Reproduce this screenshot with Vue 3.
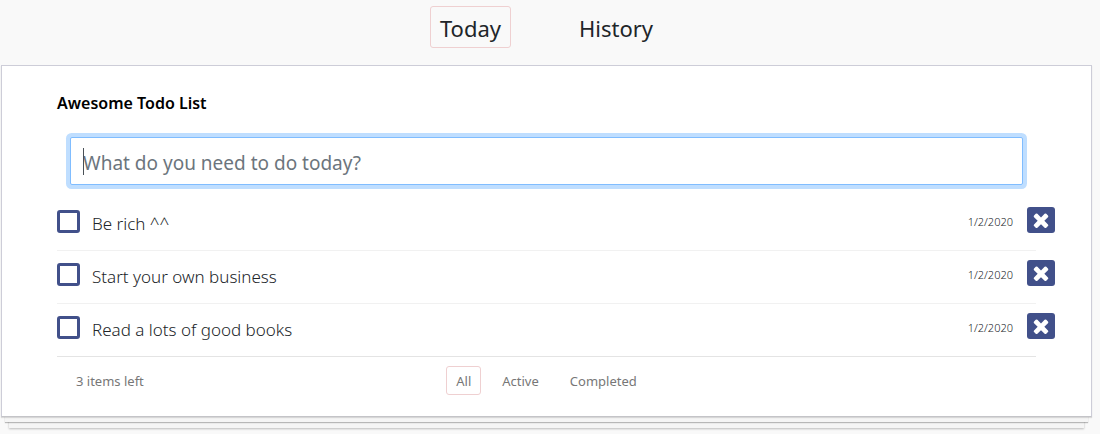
<script setup>
import { ref, computed } from 'vue'

const tabs = ['Today', 'History']
const filters = ['All', 'Active', 'Completed']
const tab = ref('Today')
const filter = ref('All')
const draft = ref('')
const todos = ref([
  { id: 1, title: 'Be rich ^^', date: '1/2/2020', done: false },
  { id: 2, title: 'Start your own business', date: '1/2/2020', done: false },
  { id: 3, title: 'Read a lots of good books', date: '1/2/2020', done: false }
])
const left = computed(() => todos.value.filter(t => !t.done).length)
const shown = computed(() =>
  todos.value.filter(t => filter.value === 'All' || t.done === (filter.value === 'Completed'))
)
function add() {
  if (!draft.value.trim()) return
  todos.value.push({ id: Date.now(), title: draft.value.trim(), date: new Date().toLocaleDateString(), done: false })
  draft.value = ''
}
function remove(id) {
  todos.value = todos.value.filter(t => t.id !== id)
}
</script>

<template>
  <div class="app">
    <nav class="tabs">
      <a v-for="t in tabs" :key="t" href="#" class="tab" :class="{ selected: t === tab }" @click.prevent="tab = t">{{ t }}</a>
    </nav>
    <main class="card">
      <h1 class="title">Awesome Todo List</h1>
      <form class="entry" @submit.prevent="add">
        <input v-model="draft" class="field" type="text" placeholder="What do you need to do today?" aria-label="New todo">
        <span v-if="!draft" class="caret"></span>
      </form>
      <ul class="list">
        <li v-for="todo in shown" :key="todo.id" class="row">
          <input :id="`todo-${todo.id}`" v-model="todo.done" class="check" type="checkbox">
          <label class="name" :for="`todo-${todo.id}`">{{ todo.title }}</label>
          <span class="date">{{ todo.date }}</span>
          <button class="remove" type="button" aria-label="Delete" @click="remove(todo.id)">
            <svg width="22" height="22" viewBox="0 0 1792 1792" aria-hidden="true">
              <path fill="#fff" d="M1490 1322q0 40-28 68l-136 136q-28 28-68 28t-68-28l-294-294-294 294q-28 28-68 28t-68-28l-136-136q-28-28-28-68t28-68l294-294-294-294q-28-28-28-68t28-68l136-136q28-28 68-28t68 28l294 294 294-294q28-28 68-28t68 28l136 136q28 28 28 68t-28 68l-294 294 294 294q28 28 28 68z" />
            </svg>
          </button>
        </li>
      </ul>
      <footer class="footer">
        <span class="count">{{ left }} items left</span>
        <div class="filters">
          <a v-for="f in filters" :key="f" href="#" class="filter" :class="{ selected: f === filter }" @click.prevent="filter = f">{{ f }}</a>
        </div>
      </footer>
    </main>
  </div>
</template>

<style>
body {
  background: #f9f9f9;
}
</style>

<style scoped>
.app {
  box-sizing: border-box;
  padding: 6px 8px 17px 1px;
  font-family: "Noto Sans", "Open Sans", sans-serif;
  color: #212529;
}
.tabs {
  display: flex;
  justify-content: center;
  gap: 58px;
  margin-bottom: 17px;
}
.tab {
  padding: 3px 9px 1px;
  border: 1px solid transparent;
  border-radius: 3px;
  color: #212529;
  font-size: 22px;
  line-height: 36px;
  text-decoration: none;
}
.tab.selected,
.filter.selected {
  border-color: #efd0d1;
}
.card {
  padding: 23px 55px 21px;
  border: 1px solid #cdcdd8;
  border-bottom-color: #c4c4c8;
  background: #fff;
  box-shadow:
    0 1px 1px rgba(0, 0, 0, 0.12),
    0 9px 0 -4px #f5f5f5,
    0 10px 1px -4px rgba(0, 0, 0, 0.25),
    0 19px 0 -8px #f5f5f5,
    0 20px 2px -8px rgba(0, 0, 0, 0.25);
}
.title {
  margin: 0;
  color: #000;
  font-size: 16px;
  font-weight: 600;
  line-height: 28px;
}
.entry {
  position: relative;
  margin: 20px 13px 13px;
}
.field {
  display: block;
  box-sizing: border-box;
  width: 100%;
  height: 48px;
  padding: 7px 12px 4px;
  border: 1px solid #80bdff;
  border-radius: 2px;
  outline: none;
  background: #fff;
  box-shadow: 0 0 0 4px #bfdeff;
  color: #495057;
  font: inherit;
  font-size: 19px;
}
.field::placeholder {
  color: #6c757d;
  opacity: 1;
}
.caret {
  position: absolute;
  top: 11px;
  left: 13px;
  width: 1px;
  height: 27px;
  background: #495057;
}
.list {
  margin: 0;
  padding: 0;
  list-style: none;
}
.row {
  display: flex;
  align-items: flex-start;
  box-sizing: border-box;
  height: 53px;
  border-bottom: 1px solid #f1f1f1;
}
.row:last-child {
  border-color: #e4e4e4;
}
.check {
  appearance: none;
  box-sizing: border-box;
  width: 23px;
  height: 23px;
  margin: 12px 12px 0 0;
  border: 3px solid #41508a;
  border-radius: 3px;
  background: #fff;
}
.check:checked {
  background: #41508a;
}
.name {
  flex: 1;
  font-size: 17px;
  font-weight: 300;
  line-height: 52px;
}
.date {
  margin-right: 14px;
  font-size: 11px;
  font-weight: 300;
  line-height: 48px;
}
.remove {
  display: grid;
  place-items: center;
  width: 28px;
  height: 26px;
  margin: 9px -19px 0 0;
  padding: 0;
  border: 0;
  border-radius: 3px;
  background: #41508a;
}
.footer {
  display: grid;
  grid-template-columns: 1fr auto 1fr;
  align-items: center;
  padding: 9px 0 0;
  color: #777;
  font-size: 13px;
}
.count {
  padding-left: 19px;
}
.filters {
  display: flex;
  gap: 11px;
}
.filter {
  padding: 4px 9px 2px;
  border: 1px solid transparent;
  border-radius: 3px;
  color: #777;
  line-height: 21px;
  text-decoration: none;
}
</style>
